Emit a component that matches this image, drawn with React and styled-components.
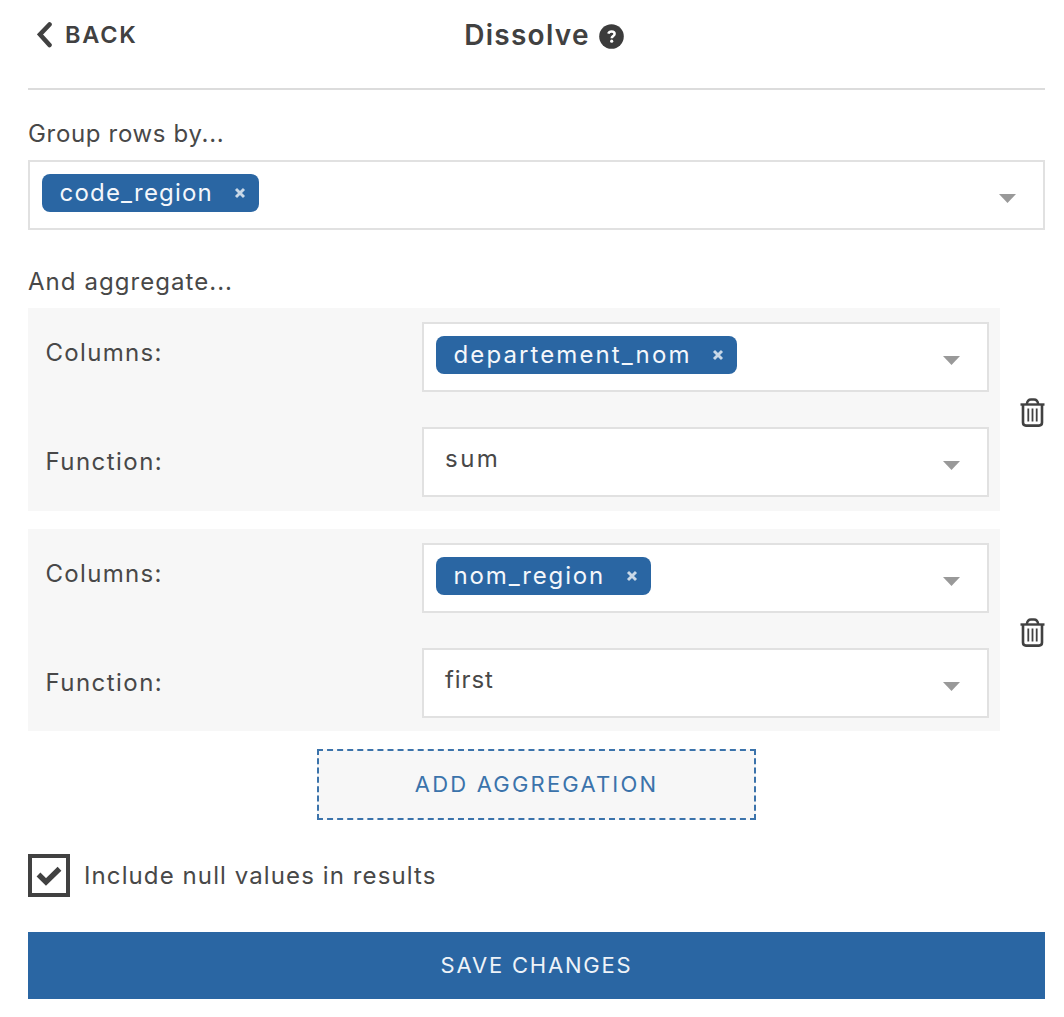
import React, { useState } from "react";
import styled, { createGlobalStyle } from "styled-components";

const GlobalStyle = createGlobalStyle`
  * { box-sizing: border-box; }
  body {
    margin: 0;
    background: #fff;
    color: #484848;
    font-family: Inter, "Liberation Sans", sans-serif;
  }
  button { font: inherit; color: inherit; border: 0; background: none; padding: 0; cursor: pointer; }
`;

const Page = styled.main`
  height: 1017px;
  padding: 0 19px 0 28px;
  display: flex;
  flex-direction: column;
  overflow: hidden;
`;

const Header = styled.header`
  height: 90px;
  flex: none;
  display: grid;
  grid-template-columns: 1fr auto 1fr;
  padding-bottom: 18px;
  align-items: center;
  border-bottom: 2px solid #dcdcdc;
  color: #414141;
`;

const BackButton = styled.button`
  display: flex;
  align-items: center;
  gap: 13px;
  padding-left: 9px;
  justify-self: start;
`;

const Title = styled.h1`
  margin: 0;
  padding-left: 15px;
  display: flex;
  align-items: center;
  gap: 9px;
`;

const HelpIcon = styled.svg`
  margin-top: 3px;
`;

const Text = styled.span`
  font-size: ${(p) => p.$size || 24}px;
  font-weight: ${(p) => p.$weight || 400};
  letter-spacing: ${(p) => p.$track || 0}px;
  line-height: 30px;
  white-space: nowrap;
`;

const FieldLabel = styled.div`
  flex: none;
  height: ${(p) => p.$height}px;
  padding-top: ${(p) => p.$top}px;
`;

const SelectBox = styled.div`
  height: 70px;
  flex: none;
  border: 2px solid #e1e1e1;
  background: #fff;
  display: flex;
  align-items: flex-start;
  justify-content: space-between;
  padding: 12px 27px 0 12px;
`;

const Chip = styled.div`
  width: ${(p) => p.$width}px;
  height: 38px;
  padding: 4px 13px 4px 17.5px;
  border-radius: 8px;
  background: #2a66a3;
  color: #f4f7fb;
  display: flex;
  align-items: center;
  justify-content: space-between;
`;

const ChipRemove = styled.button`
  display: flex;
`;

const Value = styled.div`
  padding: 3px 0 0 9px;
`;

const Caret = styled.svg`
  flex: none;
  margin-top: 20px;
`;

const Aggregation = styled.section`
  flex: none;
  display: flex;
  align-items: center;
  justify-content: space-between;
  margin-bottom: 18px;
`;

const Panel = styled.div`
  width: 972px;
  height: ${(p) => p.$height}px;
  padding: 14px 11px 0 17.5px;
  background: #f7f7f7;
  display: grid;
  grid-template-columns: 376.5px 1fr;
  grid-template-rows: 70px 70px;
  row-gap: 35px;
`;

const RowLabel = styled.div`
  padding-top: ${(p) => p.$top}px;
`;

const TrashButton = styled.button`
  display: flex;
  margin-top: 5px;
`;

const AddButton = styled.button`
  && {
    flex: none;
    width: 439px;
    height: 71px;
    margin-left: 289px;
    padding-bottom: 2px;
    border: 2px dashed #3b73ab;
    background: #f7f7f7;
    color: #3b73ab;
  }
`;

const CheckRow = styled.label`
  flex: none;
  height: 43px;
  margin: 34px 0 35px;
  display: flex;
  align-items: center;
  gap: 14px;
`;

const CheckBox = styled.span`
  width: 42px;
  height: 43px;
  border: 4px solid #414141;
  display: grid;
  place-items: center;
`;

const SaveButton = styled.button`
  && {
    flex: none;
    height: 67px;
    padding-bottom: 2px;
    background: #2a66a3;
    color: #eef3f8;
  }
`;

function Select({ chip, value, track }) {
  return (
    <SelectBox>
      {chip ? (
        <Chip $width={chip.width}>
          <Text $track={track}>{chip.name}</Text>
          <ChipRemove aria-label="Remove">
            <svg width="12" height="12" viewBox="0 0 12 12">
              <path d="M2 2 10 10M10 2 2 10" stroke="#c9d8e7" strokeWidth="2.9" />
            </svg>
          </ChipRemove>
        </Chip>
      ) : (
        <Value>
          <Text $track={track}>{value}</Text>
        </Value>
      )}
      <Caret width="17" height="9" viewBox="0 0 17 9">
        <path d="M0 0H17L8.5 9Z" fill="#999" />
      </Caret>
    </SelectBox>
  );
}

function Trash() {
  return (
    <svg width="25" height="29" viewBox="0 0 25 29" fill="none" stroke="#414141">
      <path d="M.5 6.5H24.5" strokeWidth="2.4" />
      <path d="M6.8 6.2C7.2 3 8.7 1.5 11 1.5H14C16.3 1.5 17.8 3 18.2 6.2" strokeWidth="2.4" />
      <path d="M3 7V24.5Q3 27.6 6 27.6H19Q22 27.6 22 24.5V7" strokeWidth="2.6" />
      <path d="M8.3 10.5V23.5M12.5 10.5V23.5M16.7 10.5V23.5" strokeWidth="1.8" />
    </svg>
  );
}

const aggregations = [
  { name: "departement_nom", width: 301, nameTrack: 2.1, fn: "sum", fnTrack: 2.5, height: 203 },
  { name: "nom_region", width: 215, nameTrack: 1.85, fn: "first", fnTrack: 0.9, height: 202 },
];

export default function App() {
  const [checked, setChecked] = useState(true);
  return (
    <>
      <GlobalStyle />
      <Page>
        <Header>
          <BackButton>
            <svg width="15" height="26" viewBox="0 0 15 26" fill="none">
              <path d="M12.5 2.5 3 12.5 12.5 23" stroke="#414141" strokeWidth="4.6" strokeLinecap="round" strokeLinejoin="miter" />
            </svg>
            <Text $weight={600} $size={23.5} $track={1.8}>BACK</Text>
          </BackButton>
          <Title>
            <Text $weight={600} $size={28} $track={1.25}>Dissolve</Text>
            <HelpIcon width="25" height="25" viewBox="0 0 25 25">
              <circle cx="12.5" cy="12.5" r="12.3" fill="#3c3c3c" />
              <path d="M9.3 9.7C9.8 8.3 11 7.5 12.6 7.5C14.6 7.5 15.6 8.5 15.6 9.9C15.6 12 12.7 12 12.7 14.3" fill="none" stroke="#fff" strokeWidth="2.5" />
              <circle cx="12.7" cy="17.2" r="1.6" fill="#fff" />
            </HelpIcon>
          </Title>
        </Header>

        <FieldLabel $height={70} $top={28.5}>
          <Text $track={0.67}>Group rows by...</Text>
        </FieldLabel>
        <Select chip={{ name: "code_region", width: 217 }} track={1.2} />
        <FieldLabel $height={78} $top={37}>
          <Text $track={1.05}>And aggregate...</Text>
        </FieldLabel>

        {aggregations.map((a) => (
          <Aggregation key={a.name}>
            <Panel $height={a.height}>
              <RowLabel $top={16}><Text $track={1.3}>Columns:</Text></RowLabel>
              <Select chip={a} track={a.nameTrack} />
              <RowLabel $top={20}><Text $track={1.45}>Function:</Text></RowLabel>
              <Select value={a.fn} track={a.fnTrack} />
            </Panel>
            <TrashButton aria-label="Delete"><Trash /></TrashButton>
          </Aggregation>
        ))}

        <AddButton>
          <Text $size={22} $track={2.2}>ADD AGGREGATION</Text>
        </AddButton>

        <CheckRow onClick={() => setChecked(!checked)}>
          <CheckBox>
            {checked && (
              <svg width="26" height="20" viewBox="0 0 26 20" fill="none">
                <path d="M2.5 8.5 10 16 23.5 2.8" stroke="#414141" strokeWidth="5.4" />
              </svg>
            )}
          </CheckBox>
          <Text $track={1.1}>Include null values in results</Text>
        </CheckRow>

        <SaveButton>
          <Text $size={22} $track={1.8}>SAVE CHANGES</Text>
        </SaveButton>
      </Page>
    </>
  );
}
